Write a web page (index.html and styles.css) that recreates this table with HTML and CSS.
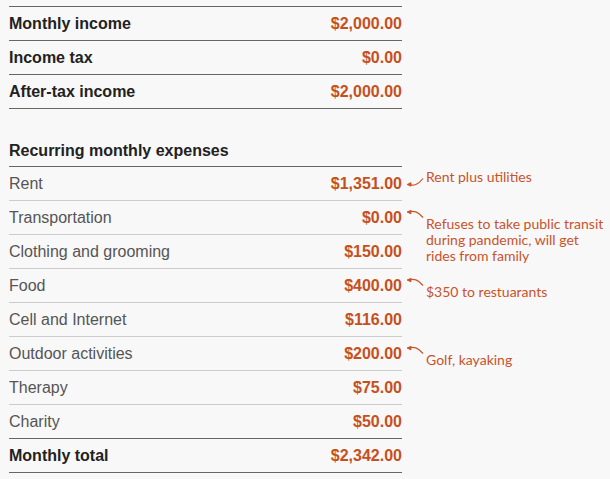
FILE: index.html
```html
<!DOCTYPE html>
<html>
<head>
<meta charset="utf-8">
<link rel="stylesheet" href="styles.css">
</head>
<body>
<div class="sheet">
  <div class="table">
    <div class="row strong first"><span class="label">Monthly income</span><span class="value">$2,000.00</span></div>
    <div class="row strong"><span class="label">Income tax</span><span class="value">$0.00</span></div>
    <div class="row strong"><span class="label">After-tax income</span><span class="value">$2,000.00</span></div>
  </div>

  <div class="section-head">Recurring monthly expenses</div>

  <div class="table">
    <div class="row light">
      <span class="label">Rent</span><span class="value">$1,351.00</span>
      <div class="note note-up">
        <svg class="arrow" width="20" height="24" viewBox="0 0 20 24"><path d="M3 17.5 C 9 19, 13 18, 18 11.5" fill="none" stroke="#c8532a" stroke-width="1.2"/><path d="M6 15.6 L2 17.5 L6 19.2 Z" fill="#c8532a" stroke="#c8532a" stroke-width="0.8" stroke-linejoin="round"/></svg>
        <span class="note-text">Rent plus utilities</span>
      </div>
    </div>
    <div class="row light">
      <span class="label">Transportation</span><span class="value">$0.00</span>
      <div class="note note-down">
        <svg class="arrow" width="20" height="24" viewBox="0 0 20 24"><path d="M3 11 C 9 9.5, 13 10.5, 18 16.5" fill="none" stroke="#c8532a" stroke-width="1.2"/><path d="M6 9.3 L2 11 L6 12.9 Z" fill="#c8532a" stroke="#c8532a" stroke-width="0.8" stroke-linejoin="round"/></svg>
        <span class="note-text">Refuses to take public transit<br>during pandemic, will get<br>rides from family</span>
      </div>
    </div>
    <div class="row light"><span class="label">Clothing and grooming</span><span class="value">$150.00</span></div>
    <div class="row light">
      <span class="label">Food</span><span class="value">$400.00</span>
      <div class="note note-down">
        <svg class="arrow" width="20" height="24" viewBox="0 0 20 24"><path d="M3 11 C 9 9.5, 13 10.5, 18 16.5" fill="none" stroke="#c8532a" stroke-width="1.2"/><path d="M6 9.3 L2 11 L6 12.9 Z" fill="#c8532a" stroke="#c8532a" stroke-width="0.8" stroke-linejoin="round"/></svg>
        <span class="note-text">$350 to restuarants</span>
      </div>
    </div>
    <div class="row light"><span class="label">Cell and Internet</span><span class="value">$116.00</span></div>
    <div class="row light">
      <span class="label">Outdoor activities</span><span class="value">$200.00</span>
      <div class="note note-down">
        <svg class="arrow" width="20" height="24" viewBox="0 0 20 24"><path d="M3 11 C 9 9.5, 13 10.5, 18 16.5" fill="none" stroke="#c8532a" stroke-width="1.2"/><path d="M6 9.3 L2 11 L6 12.9 Z" fill="#c8532a" stroke="#c8532a" stroke-width="0.8" stroke-linejoin="round"/></svg>
        <span class="note-text">Golf, kayaking</span>
      </div>
    </div>
    <div class="row light"><span class="label">Therapy</span><span class="value">$75.00</span></div>
    <div class="row light last-light"><span class="label">Charity</span><span class="value">$50.00</span></div>
    <div class="row strong"><span class="label">Monthly total</span><span class="value">$2,342.00</span></div>
  </div>
</div>
</body>
</html>
```

FILE: styles.css
```css
html, body {
  margin: 0;
  padding: 0;
  background: #f8f8f8;
}
body {
  font-family: "Liberation Sans", Arial, sans-serif;
}
.sheet {
  padding: 6px 0 0 9px;
  width: 393px;
}
.table {
  display: flex;
  flex-direction: column;
}
.row {
  position: relative;
  display: flex;
  justify-content: space-between;
  align-items: center;
  height: 33px;
  border-bottom: 1px solid #cccccc;
  font-size: 16px;
}
.row.first {
  border-top: 1px solid #666666;
}
.row.strong {
  border-bottom-color: #666666;
}
.row.last-light {
  border-bottom-color: #666666;
}
.strong .label {
  font-weight: bold;
  color: #222222;
}
.light .label {
  color: #555555;
}
.value {
  font-weight: bold;
  color: #c6501c;
}
.section-head {
  font-weight: bold;
  font-size: 16px;
  color: #222222;
  height: 58px;
  box-sizing: border-box;
  padding-top: 33px;
  border-bottom: 1px solid #666666;
}
.note {
  position: absolute;
  top: 0;
  left: 396px;
  display: flex;
  align-items: flex-start;
  gap: 1px;
  font-family: Lato, "Noto Sans", sans-serif;
  font-size: 14px;
  line-height: 16px;
  color: #c8532a;
  white-space: nowrap;
}
.note-up .note-text {
  margin-top: 2px;
}
.note-down .note-text {
  margin-top: 15px;
}
```
